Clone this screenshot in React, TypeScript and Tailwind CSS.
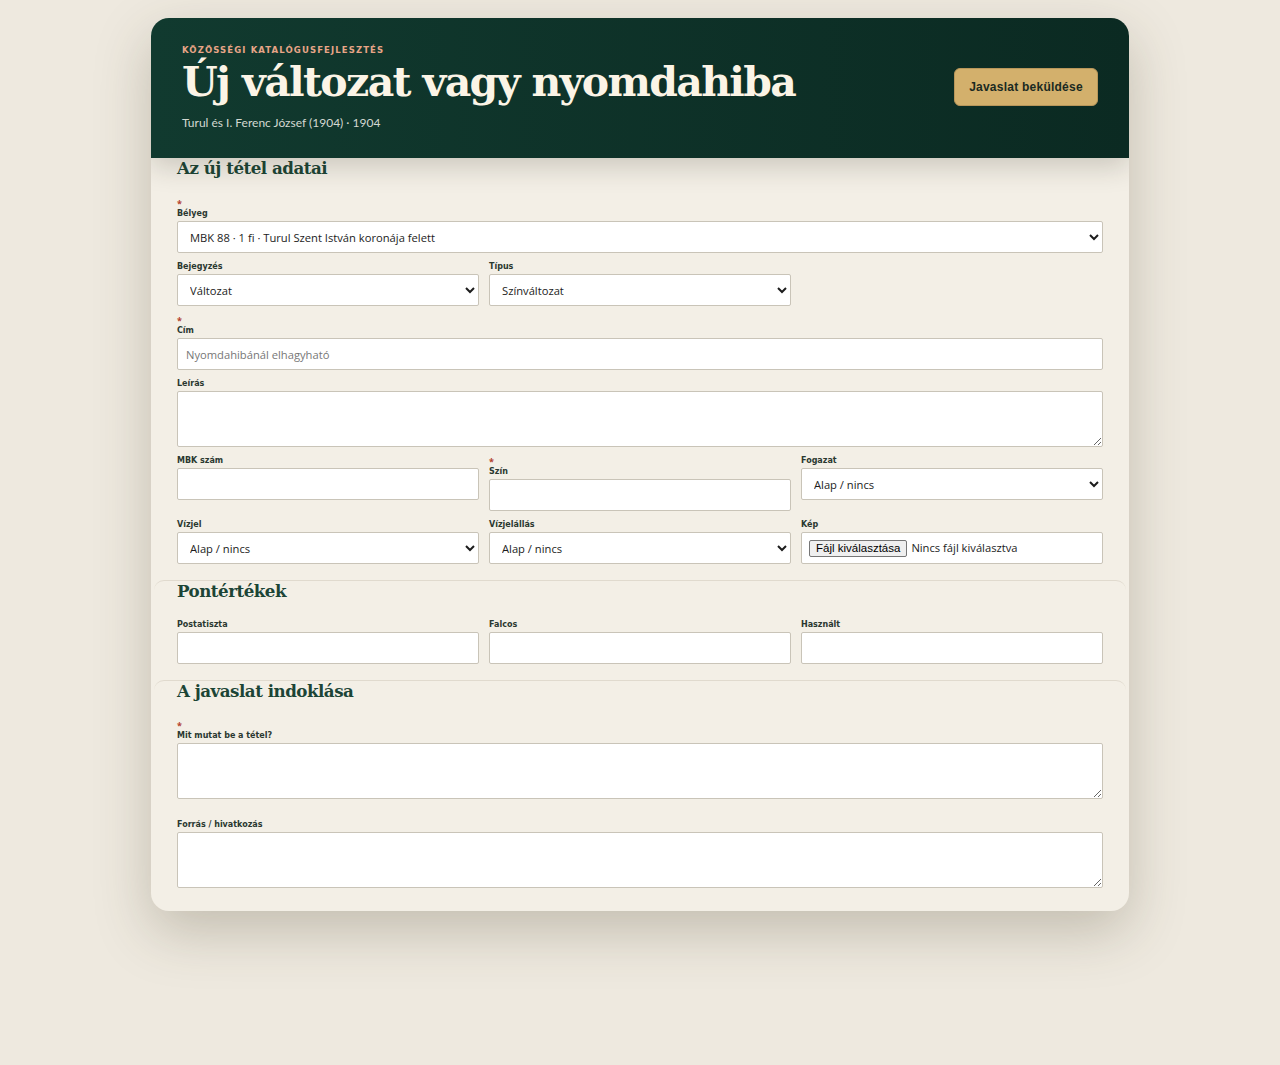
import { useState } from "react";

const labelCls =
  "block text-[8px] leading-[10px] font-bold text-[#2a3830] mb-[2px] [font-family:'DejaVu_Sans',sans-serif]";
const inputCls =
  "w-full h-8 bg-white border border-[#c9c4b8] rounded-[2px] px-2 text-[11.2px] text-[#1c1c1c] [font-family:'Open_Sans',sans-serif] outline-none";
const areaCls =
  "w-full h-14 bg-white border border-[#c9c4b8] rounded-[2px] px-2 py-1 text-[11.2px] text-[#1c1c1c] [font-family:'Open_Sans',sans-serif] outline-none block";

const Req = () => (
  <span className="block h-[11px] text-[9px] leading-[11px] text-[#b3402f] font-bold">*</span>
);

const Field = ({
  label,
  required,
  children,
}: {
  label: string;
  required?: boolean;
  children: React.ReactNode;
}) => (
  <div>
    {required && <Req />}
    <label className={labelCls}>{label}</label>
    {children}
  </div>
);

const Select = ({ value, options }: { value: string; options: string[] }) => {
  const [v, setV] = useState(value);
  return (
    <select className={inputCls} value={v} onChange={(e) => setV(e.target.value)}>
      {options.map((o) => (
        <option key={o}>{o}</option>
      ))}
    </select>
  );
};

const FileInput = () => (
  <label className="flex items-center h-8 bg-white border border-[#c9c4b8] rounded-[2px] px-[7px] gap-1 cursor-pointer">
    <span className="bg-[#efefef] border border-[#767676] rounded-[2px] px-[6px] h-[17px] leading-[15px] text-[11.5px] text-black [font-family:'Liberation_Sans',sans-serif]">
      Fájl kiválasztása
    </span>
    <span className="text-[11.2px] text-[#1c1c1c] [font-family:'Open_Sans',sans-serif]">
      Nincs fájl kiválasztva
    </span>
    <input type="file" className="hidden" />
  </label>
);

const Heading = ({ children }: { children: React.ReactNode }) => (
  <h2 className="text-[16.7px] leading-[20px] font-bold text-[#1c4536] [font-family:'DejaVu_Serif',serif] tracking-[-0.03em]">
    {children}
  </h2>
);

const opts = ["Alap / nincs"];

export default function App() {
  return (
    <div className="min-h-[1065px] bg-[#eee9df] pt-[18px] [font-family:'Open_Sans',sans-serif]">
      <div className="w-[978px] ml-[151px] bg-[#f3efe6] rounded-[18px] overflow-hidden shadow-[0_20px_55px_rgba(70,60,40,0.26)]">
        {/* Header */}
        <div className="relative z-10 h-[140px] bg-gradient-to-r from-[#113a2f] to-[#0b2a22] flex items-start justify-between pl-[31px] pr-[31px] pt-[27px] shadow-[0_8px_26px_rgba(40,35,20,0.2)]">
          <div>
            <div className="text-[8.5px] leading-[10px] font-bold tracking-[0.13em] text-[#e8a587] [font-family:'DejaVu_Sans',sans-serif]">
              KÖZÖSSÉGI KATALÓGUSFEJLESZTÉS
            </div>
            <h1 className="mt-[3px] text-[41px] leading-[48px] font-bold text-[#fbf4e6] tracking-[-0.04em] [font-family:'DejaVu_Serif',serif]">
              Új változat vagy nyomdahiba
            </h1>
            <div className="mt-[9px] text-[12px] leading-[16px] text-[#d3d8d1] [font-family:'Lato',sans-serif]">
              Turul és I. Ferenc József (1904) · 1904
            </div>
          </div>
          <button className="mt-[23px] w-[144px] h-[38px] bg-[#d3b06c] rounded-[6px] border border-[#b8965a] text-[12px] font-bold text-[#1a2a22] [font-family:'Liberation_Sans',sans-serif] tracking-[0.02em]">
            Javaslat beküldése
          </button>
        </div>

        {/* Section 1 */}
        <section className="mx-[3px] px-[23px] pb-4 rounded-[10px]">
          <Heading>Az új tétel adatai</Heading>
          <div className="mt-5 grid grid-cols-3 gap-x-[10px] gap-y-[9px]">
            <div className="col-span-3">
              <Field label="Bélyeg" required>
                <Select
                  value="MBK 88 · 1 fi · Turul Szent István koronája felett"
                  options={["MBK 88 · 1 fi · Turul Szent István koronája felett"]}
                />
              </Field>
            </div>
            <Field label="Bejegyzés">
              <Select value="Változat" options={["Változat", "Nyomdahiba"]} />
            </Field>
            <Field label="Típus">
              <Select value="Színváltozat" options={["Színváltozat"]} />
            </Field>
            <div />
            <div className="col-span-3">
              <Field label="Cím" required>
                <input className={inputCls + " placeholder:text-[#777]"} placeholder="Nyomdahibánál elhagyható" />
              </Field>
            </div>
            <div className="col-span-3">
              <Field label="Leírás">
                <textarea className={areaCls} />
              </Field>
            </div>
            <Field label="MBK szám">
              <input className={inputCls} />
            </Field>
            <Field label="Szín" required>
              <input className={inputCls} />
            </Field>
            <Field label="Fogazat">
              <Select value="Alap / nincs" options={opts} />
            </Field>
            <Field label="Vízjel">
              <Select value="Alap / nincs" options={opts} />
            </Field>
            <Field label="Vízjelállás">
              <Select value="Alap / nincs" options={opts} />
            </Field>
            <Field label="Kép">
              <FileInput />
            </Field>
          </div>
        </section>

        {/* Section 2 */}
        <section className="mx-[3px] px-[23px] pb-4 border-t border-[#e0dace] rounded-[10px]">
          <Heading>Pontértékek</Heading>
          <div className="mt-[19px] grid grid-cols-3 gap-x-[10px]">
            <Field label="Postatiszta">
              <input className={inputCls} />
            </Field>
            <Field label="Falcos">
              <input className={inputCls} />
            </Field>
            <Field label="Használt">
              <input className={inputCls} />
            </Field>
          </div>
        </section>

        {/* Section 3 */}
        <section className="mx-[3px] px-[23px] pb-[23px] border-t border-[#e0dace] rounded-[10px]">
          <Heading>A javaslat indoklása</Heading>
          <div className="mt-[19px] flex flex-col gap-[21px]">
            <Field label="Mit mutat be a tétel?" required>
              <textarea className={areaCls} />
            </Field>
            <Field label="Forrás / hivatkozás">
              <textarea className={areaCls} />
            </Field>
          </div>
        </section>
      </div>
    </div>
  );
}
